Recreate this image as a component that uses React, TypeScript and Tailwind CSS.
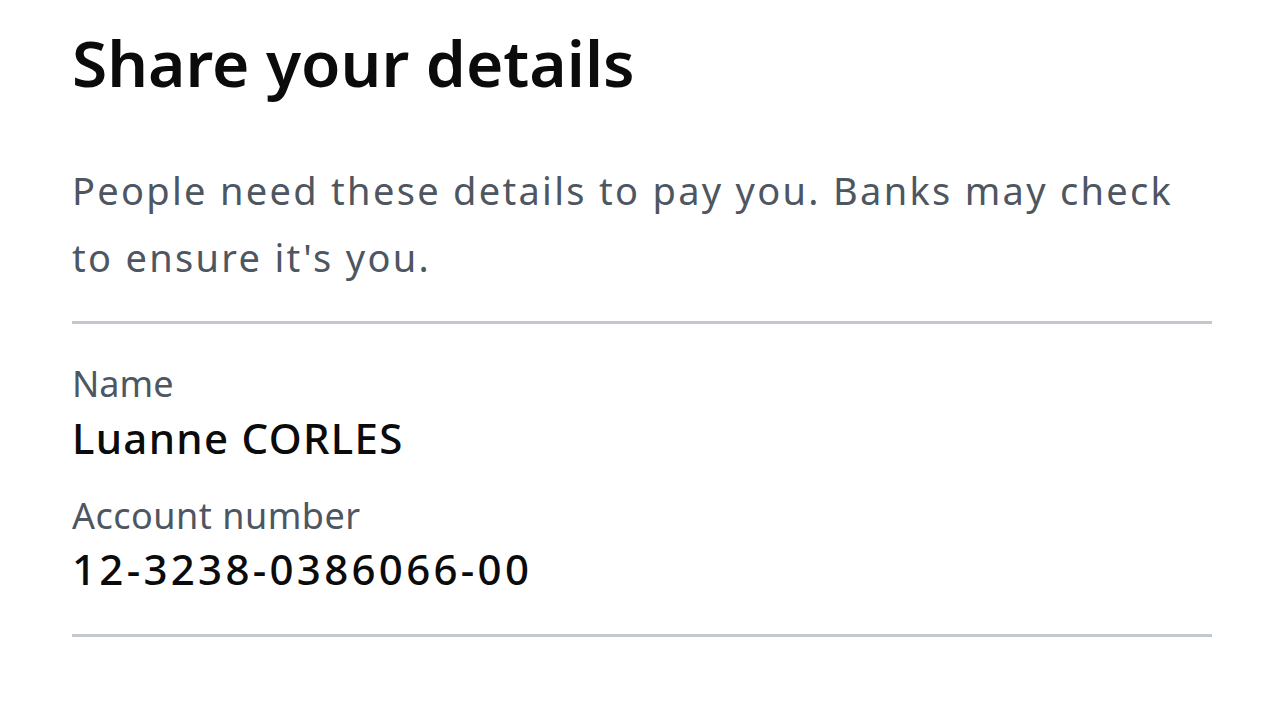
export default function App() {
  return (
    <div className="min-h-[719px] bg-white px-[72px] font-['Noto_Sans',sans-serif]">
      <h1 className="pt-[23px] text-[64px] leading-[80px] font-semibold text-[#0b0b0b]">
        Share your details
      </h1>
      <p className="mt-[54px] text-[38px] leading-[67px] tracking-[2.3px] text-[#4d5661]">
        People need these details to pay you. Banks may check to ensure it's you.
      </p>
      <div className="mt-[30px] border-y-[3px] border-[#c3c7ce] pt-[38px] pb-[39px]">
        <div className="text-[36px] leading-[44px] text-[#4d5661]">Name</div>
        <div className="mt-[6px] text-[42px] leading-[52px] tracking-[1.3px] font-medium text-[#0b0b0b]">
          Luanne CORLES
        </div>
        <div className="mt-[30px] text-[36px] leading-[44px] tracking-[0.5px] text-[#4d5661]">
          Account number
        </div>
        <div className="mt-[5px] text-[42px] leading-[52px] tracking-[3.3px] font-medium text-[#0b0b0b]">
          12-3238-0386066-00
        </div>
      </div>
    </div>
  );
}
